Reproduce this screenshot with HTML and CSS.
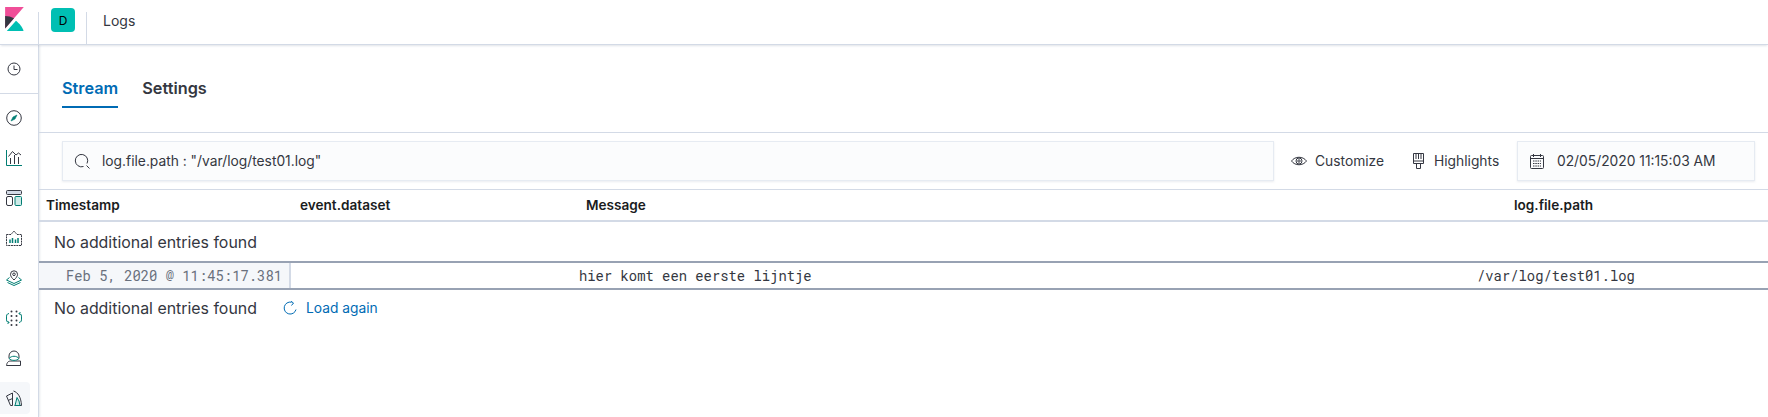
FILE: index.html
```html
<!DOCTYPE html>
<html lang="en">
<head>
<meta charset="utf-8">
<title>Logs</title>
<link rel="stylesheet" href="styles.css">
</head>
<body>
<header class="topbar">
  <div class="logo-cell">
    <svg class="logo" viewBox="4 0 25 32" width="19" height="24"><path fill="#f04e98" d="M4 0v28.789L28.935.017z"/><path fill="#343741" d="M4 12v16.789l11.906-13.738A24.721 24.721 0 0 0 4 12"/><path fill="#00bfb3" d="M18.479 18.336L6.268 32h22.258c-1.028-5.151-5.775-10.23-10.047-13.664"/></svg>
  </div>
  <div class="space-cell"><span class="avatar">D</span></div>
  <div class="crumb">Logs</div>
</header>
<div class="shell">
  <nav class="rail">
    <div class="rail-first"><svg width="14" height="14" viewBox="0 0 14 14" fill="none" stroke="#343741"><circle cx="7" cy="7" r="6"/><path d="M7 3.500V7.500H10.500"/></svg></div>
    <div class="rail-item"><svg width="16" height="16" viewBox="0 0 16 16" fill="none" stroke="#343741"><circle cx="8" cy="8" r="7.300"/><path d="M5 11L7 7 11 5 9 9Z" fill="#017d73" stroke="#017d73" stroke-width=".6"/></svg></div>
    <div class="rail-item"><svg width="16" height="16" viewBox="0 0 16 16" fill="none" stroke="#343741"><path d="M.5 0V15.500H16" stroke="#017d73"/><path d="M2.500 6.500L6.500 1.500 10 5 12.500 3 15 5M4.500 14V8M8.500 14V5M12.500 14V7"/></svg></div>
    <div class="rail-item"><svg width="16" height="16" viewBox="0 0 16 16" fill="none" stroke="#343741"><rect x=".5" y=".5" width="15" height="4" rx="1" fill="#d3dae6"/><rect x=".5" y="6.500" width="6" height="9" rx="1.500"/><rect x="9" y="6.500" width="6.500" height="9" rx="1" stroke="#017d73" fill="#cdeae7"/></svg></div>
    <div class="rail-item"><svg width="16" height="16" viewBox="0 0 16 16" fill="none" stroke="#343741"><path d="M.5 4.500H5L8 1 11 4.500H15.500V15.500H.5Z" stroke-dasharray="2 .7"/><path d="M4 13V9.500M6.500 13V8M9.500 13V9.500M12 13V8" stroke="#017d73" stroke-width="1.500"/></svg></div>
    <div class="rail-item"><svg width="16" height="16" viewBox="0 0 16 16" fill="none" stroke="#343741"><path d="M8 10C6 8 4.500 6.500 4.500 4.300A3.500 3.500 0 0 1 11.500 4.300C11.500 6.500 10 8 8 10Z"/><circle cx="8" cy="4.300" r="1.300"/><path d="M3.500 7.500L.5 10 8 13.500 15.500 10 12.500 7.500M1.500 12.500L8 15.500 14.500 12.500" stroke="#017d73"/></svg></div>
    <div class="rail-item"><svg width="16" height="16" viewBox="0 0 16 16" fill="none" stroke="#017d73"><g fill="#343741" stroke="none"><circle cx="5.500" cy="1.500" r="1"/><circle cx="10.500" cy="1.500" r="1"/><circle cx="5.500" cy="6" r="1"/><circle cx="10.500" cy="6" r="1"/><circle cx="5.500" cy="10.500" r="1"/><circle cx="10.500" cy="10.500" r="1"/><circle cx="5.500" cy="15" r="1"/><circle cx="10.500" cy="15" r="1"/></g><path d="M3 3.500C.5 4 .5 5 .5 8S.5 12 3 12.500M1.500 11L3 12.500 1.500 14M13 3.500C15.500 4 15.500 5 15.500 8S15.500 12 13 12.500M14.500 2L13 3.500 14.500 5"/></svg></div>
    <div class="rail-item"><svg width="16" height="16" viewBox="0 0 16 16" fill="none" stroke="#343741"><path d="M3 8.500V6A5 5 0 0 1 13 6V8.500"/><path d="M.5 15.500C1 12 2.500 11 5 11H14.500V15.500Z"/><path d="M3 8.500C5.500 5.500 10.500 5.500 13 8.500C10.500 11 5.500 11 3 8.500Z" stroke="#017d73" fill="#fff"/></svg></div>
    <div class="rail-active"><svg width="16" height="16" viewBox="0 0 16 16" fill="none" stroke="#343741"><path d="M.5 6L6.500 3V15.500H4.500ZM6.500 8.500L2 10.500"/><path d="M7.500 1C12 2.500 15 7 15.500 15.500H8.500"/><path d="M9 15.500L11 7.500Q13.500 10.500 14 15.500Z" fill="#cdeae7" stroke="#017d73"/></svg></div>
  </nav>
  <main class="content">
    <div class="tabs">
      <span class="tab tab-on">Stream</span>
      <span class="tab">Settings</span>
    </div>
    <div class="toolbar">
      <div class="search">
        <svg width="16" height="16" viewBox="0 0 16 16" fill="none" stroke="#343741"><path d="M13 10.500A6.200 6.200 0 1 0 9.500 13.500M12.500 12.500L15.500 15.500"/></svg>
        <span>log.file.path : "/var/log/test01.log"</span>
      </div>
      <div class="tool tool-custom"><svg width="16" height="16" viewBox="0 0 16 16" fill="none" stroke="#343741"><path d="M.5 8C4 3 12 3 15.500 8C12 13 4 13 .5 8Z"/><circle cx="8" cy="8" r="3"/><circle cx="8" cy="8" r="1.200"/></svg>Customize</div>
      <div class="tool tool-high"><svg width="11" height="16" viewBox="0 0 11 16" fill="none" stroke="#343741"><path d="M.5 .5H10.500V10.500H.5Z"/><path d="M3 .5V6M5.500 .5V6M8 .5V6M.5 8H10.500M3.500 10.500V15.500H7.500V10.500"/></svg>Highlights</div>
      <div class="date">
        <svg width="14" height="15" viewBox="0 0 14 15" fill="none" stroke="#343741"><rect x=".5" y="1.500" width="13" height="13" rx="1"/><path d="M3.500 0V3M10.500 0V3M.5 4.500H13.500"/><path d="M3 7H11M3 9.500H11M3 12H11" stroke-dasharray="1.500 .8"/></svg>
        <span>02/05/2020 11:15:03 AM</span>
      </div>
    </div>
    <div class="cols">
      <span class="col col-time">Timestamp</span>
      <span class="col col-set">event.dataset</span>
      <span class="col col-msg">Message</span>
      <span class="col">log.file.path</span>
    </div>
    <div class="note note-top">No additional entries found</div>
    <div class="row">
      <span class="cell-time">Feb 5, 2020 @ 11:45:17.381</span>
      <span class="cell-msg">hier komt een eerste lijntje</span>
      <span class="cell-path">/var/log/test01.log</span>
    </div>
    <div class="note note-bottom">No additional entries found
      <span class="reload"><svg width="14" height="14" viewBox="0 0 14 14" fill="none" stroke="#006bb4"><path d="M13 8.500A6 6 0 1 1 8.500 1.200M8 .3L10.500 2 8.500 4.500"/></svg>Load again</span>
    </div>
  </main>
</div>
</body>
</html>
```
FILE: styles.css
```css
* { box-sizing: border-box; }
html, body { margin: 0; height: 100%; }
body { width: 1768px; height: 417px; overflow: hidden; background: #fff; color: #343741; font-family: Inter, "Liberation Sans", sans-serif; font-size: 14px; }
.topbar { height: 45px; display: flex; border-bottom: 1px solid #d3dae6; box-shadow: 0 2px 2px -1px rgba(152,162,179,.3); position: relative; background: #fff; }
.logo-cell { width: 38px; padding: 7px 0 0 5px; flex: none; }
.logo { display: block; }
.space-cell { width: 49px; height: 32px; margin-top: 12px; padding-left: 12px; flex: none; border-left: 1px solid #d3dae6; border-right: 1px solid #d3dae6; }
.avatar { width: 24px; height: 24px; margin-top: -4px; border-radius: 4px; background: #00bfb3; color: #000; font-size: 12px; display: flex; align-items: center; justify-content: center; }
.crumb { padding: 12px 0 0 16px; font-size: 14px; line-height: 17px; }
.shell { display: flex; height: 372px; }
.rail { width: 39px; flex: none; border-right: 1px solid #d3dae6; box-shadow: 1px 0 2px rgba(152,162,179,.25); display: flex; flex-direction: column; }
.rail-first { height: 49px; flex: none; display: flex; align-items: center; justify-content: center; padding-right: 11px; border-bottom: 1px solid #d3dae6; margin-bottom: 4px; }
.rail-item { height: 40px; flex: none; display: flex; align-items: center; justify-content: center; padding-right: 10px; }
.rail-active { width: 30px; height: 32px; flex: none; margin-top: 4px; display: flex; align-items: center; justify-content: center; padding-right: 2px; background: #f5f7fa; border-radius: 0 4px 4px 0; }
.content { flex: 1; min-width: 0; }
.tabs { height: 88px; display: flex; gap: 24px; padding: 20px 0 0 23px; border-bottom: 1px solid #d3dae6; }
.tab { height: 43px; line-height: 46px; font-size: 16.300px; font-weight: 600; }
.tab-on { color: #006bb4; border-bottom: 2px solid #006bb4; }
.toolbar { height: 57px; display: flex; align-items: flex-start; padding: 8px 0 0 23px; border-bottom: 1px solid #d3dae6; }
.search { width: 1212px; height: 40px; flex: none; display: flex; align-items: center; gap: 12px; padding-left: 11px; font-size: 13.800px; background: #fbfcfd; border: 1px solid #e6ebf2; box-shadow: 0 1px 2px rgba(152,162,179,.2); }
.tool { height: 40px; flex: none; display: flex; align-items: center; font-size: 13.800px; }
.tool-custom { margin-left: 17px; width: 122px; gap: 8px; }
.tool-high { width: 104px; gap: 10px; }
.date { width: 238px; height: 40px; flex: none; display: flex; align-items: center; gap: 13px; padding-left: 12px; font-size: 13.800px; background: #fbfcfd; border: 1px solid #e6ebf2; box-shadow: 0 1px 2px rgba(152,162,179,.2); }
.cols { height: 32px; display: flex; align-items: center; padding-left: 7px; font-weight: 600; font-size: 13.600px; color: #1a1c21; border-bottom: 2px solid #d3dae6; }
.col-time { width: 254px; }
.col-set { width: 286px; }
.col-msg { width: 928px; }
.note { display: flex; align-items: center; padding-left: 15px; font-size: 15.900px; }
.note-top { height: 39px; padding-top: 2px; }
.row { height: 29px; display: flex; align-items: center; border-top: 2px solid #98a2b3; border-bottom: 2px solid #98a2b3; font-family: "Roboto Mono", "DejaVu Sans Mono", "Liberation Mono", monospace; font-size: 13.850px; white-space: nowrap; }
.cell-time { width: 252px; height: 100%; flex: none; display: flex; align-items: center; padding-left: 27px; background: #f5f7fa; border-right: 2px solid #d3dae6; color: #69707d; }
.cell-msg { width: 1186px; flex: none; padding-left: 288px; }
.note-bottom { height: 36px; }
.reload { margin-left: 26px; display: inline-flex; gap: 9px; align-items: center; color: #006bb4; font-size: 13.800px; }
```
